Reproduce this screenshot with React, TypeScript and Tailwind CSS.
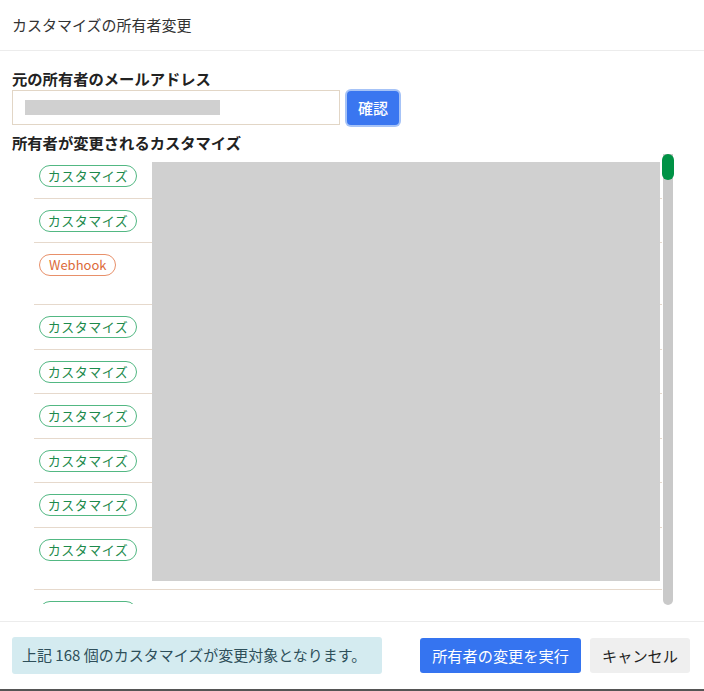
const rows: { kind: "customize" | "webhook"; tall?: boolean }[] = [
  { kind: "customize" },
  { kind: "customize" },
  { kind: "webhook", tall: true },
  { kind: "customize" },
  { kind: "customize" },
  { kind: "customize" },
  { kind: "customize" },
  { kind: "customize" },
  { kind: "customize", tall: true },
  { kind: "customize" },
  { kind: "customize" },
]

const Badge = ({ kind }: { kind: "customize" | "webhook" }) =>
  kind === "webhook" ? (
    <span className="flex h-[22px] items-center rounded-full border border-[#e8906a] px-[9px] text-[13px] text-[#dc6a3a]">
      Webhook
    </span>
  ) : (
    <span className="flex h-[22px] w-[98px] items-center justify-center rounded-full border border-[#52b883] text-[13px] tracking-[0.5px] text-[#1d8a4c]">
      カスタマイズ
    </span>
  )

const App = () => {
  return (
    <div
      className="flex h-[691px] w-[704px] flex-col border-b-2 border-[#555] bg-white text-[#222]"
      style={{ fontFamily: '"Noto Sans CJK JP", "Noto Sans", sans-serif' }}
    >
      <div className="flex h-[51px] shrink-0 items-center border-b border-[#ececec] px-3 text-[15px] text-[#333]">
        カスタマイズの所有者変更
      </div>

      <div className="flex flex-col px-3 pt-[17px]">
        <div className="text-[15.3px] font-bold leading-5">元の所有者のメールアドレス</div>
        <div className="mt-[2px] flex items-start">
          <div className="flex h-[35px] w-[328px] items-center border border-[#e2d6c6] pl-3">
            <div className="h-[15px] w-[195px] bg-[#d0d0d0]" />
          </div>
          <button className="ml-[7px] mt-[1px] h-[34px] w-[52px] rounded-[4px] bg-[#3a76f0] text-[15px] font-medium text-white ring-2 ring-[#a6c3f7]">
            確認
          </button>
        </div>
        <div className="mt-[7px] text-[15.3px] font-bold leading-5">所有者が変更されるカスタマイズ</div>
      </div>

      <div className="mt-[2px] flex h-[452px] pl-[34px] pr-[31px]">
        <div className="relative h-[450px] flex-1 overflow-hidden">
          {rows.map((r, i) => (
            <div
              key={i}
              className={`flex items-start border-b border-[#e6d9cc] pl-[5px] pt-[11px] ${r.tall ? "h-[62px]" : "h-[44.5px]"}`}
            >
              <Badge kind={r.kind} />
            </div>
          ))}
          <div className="absolute left-[118px] top-[8px] h-[419px] w-[508px] bg-[#d0d0d0]" />
        </div>
        <div className="relative w-[11px]">
          <div className="ml-[1px] h-[451px] w-[10px] rounded-b-full bg-[#c9c9c9]" />
          <div className="absolute left-0 top-0 h-[26px] w-[12px] rounded-full bg-[#009245]" />
        </div>
      </div>

      <div className="mt-[15px] flex flex-1 items-center gap-2 border-t border-[#ececec] pl-3 pr-[14px] pb-[1px]">
        <div className="flex h-[37px] w-[370px] items-center whitespace-nowrap rounded-[3px] bg-[#d4ebf0] px-[10px] text-[15px] text-[#2e4f5a]">
          上記 168 個のカスタマイズが変更対象となります。
        </div>
        <div className="ml-auto flex gap-[9px]">
          <button className="h-[35px] w-[161px] rounded-[3px] bg-[#3574f0] text-[15.2px] text-white">
            所有者の変更を実行
          </button>
          <button className="h-[35px] w-[100px] rounded-[3px] bg-[#efefef] text-[15.2px] text-[#222]">
            キャンセル
          </button>
        </div>
      </div>
    </div>
  )
}

export default App
